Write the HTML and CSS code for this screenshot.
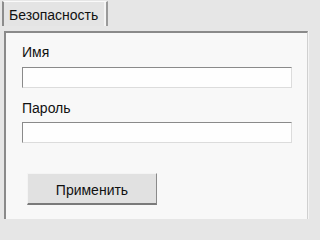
FILE: index.html
```html
<!DOCTYPE html>
<html lang="ru">
<head>
<meta charset="utf-8">
<link rel="stylesheet" href="styles.css">
</head>
<body>
<div class="window">
  <div class="tabs">
    <div class="tab">Безопасность</div>
  </div>
  <div class="panel">
    <label class="label" for="name">Имя</label>
    <input class="field" id="name" type="text">
    <label class="label label-second" for="pass">Пароль</label>
    <input class="field field-second" id="pass" type="password">
    <button class="btn" type="button">Применить</button>
  </div>
</div>
</body>
</html>
```
FILE: styles.css
```css
html, body {
  margin: 0;
  padding: 0;
  background: #e6e6e6;
}
.window {
  font-family: "Liberation Sans", Arial, sans-serif;
  font-size: 14px;
  color: #111;
  padding: 1px 3px 0 4px;
  display: flex;
  flex-direction: column;
  width: 311px;
  height: 219px;
  box-sizing: border-box;
  overflow: hidden;
}
.tabs {
  display: flex;
  margin-left: -2px;
}
.tab {
  height: 25px;
  box-sizing: border-box;
  padding: 5px 0 0 5px;
  line-height: 16px;
  background: #e4e4e4;
  border-top: 1px solid #fafafa;
  border-left: 2px solid #8c8c8c;
  border-right: 2px solid #9a9a9a;
  box-shadow: inset -2px 0 0 #f4f4f4;
  width: 106px;
}
.panel {
  flex: 1;
  margin-top: 5px;
  background: #f8f8f8;
  border-top: 2px solid #8a8a8a;
  border-left: 2px solid #8a8a8a;
  border-right: 1px solid #d0d0d0;
  box-shadow: 1px 0 0 #f4f4f4;
  display: flex;
  flex-direction: column;
  align-items: flex-start;
  padding: 11px 0 0 16px;
}
.label {
  display: block;
  line-height: 16px;
  height: 16px;
}
.label-second {
  margin-top: 12px;
}
.field {
  margin: 7px 0 0 0;
  width: 270px;
  height: 21px;
  box-sizing: border-box;
  background: #fefefe;
  border-top: 1px solid #8a8a8a;
  border-left: 1px solid #8a8a8a;
  border-bottom: 1px solid #dcdcdc;
  border-right: 1px solid #dcdcdc;
  padding: 0 3px;
  font: inherit;
  outline: none;
}
.field-second {
  margin-top: 6px;
}
.btn {
  margin: 30px 0 0 5px;
  width: 130px;
  height: 32px;
  box-sizing: border-box;
  background: #e1e1e1;
  border-top: 1px solid #f4f4f4;
  border-left: 1px solid #f4f4f4;
  border-right: 1px solid #8a8a8a;
  border-bottom: 2px solid #7a7a7a;
  font: inherit;
  color: #111;
  padding: 3px 0 0 0;
}
```
